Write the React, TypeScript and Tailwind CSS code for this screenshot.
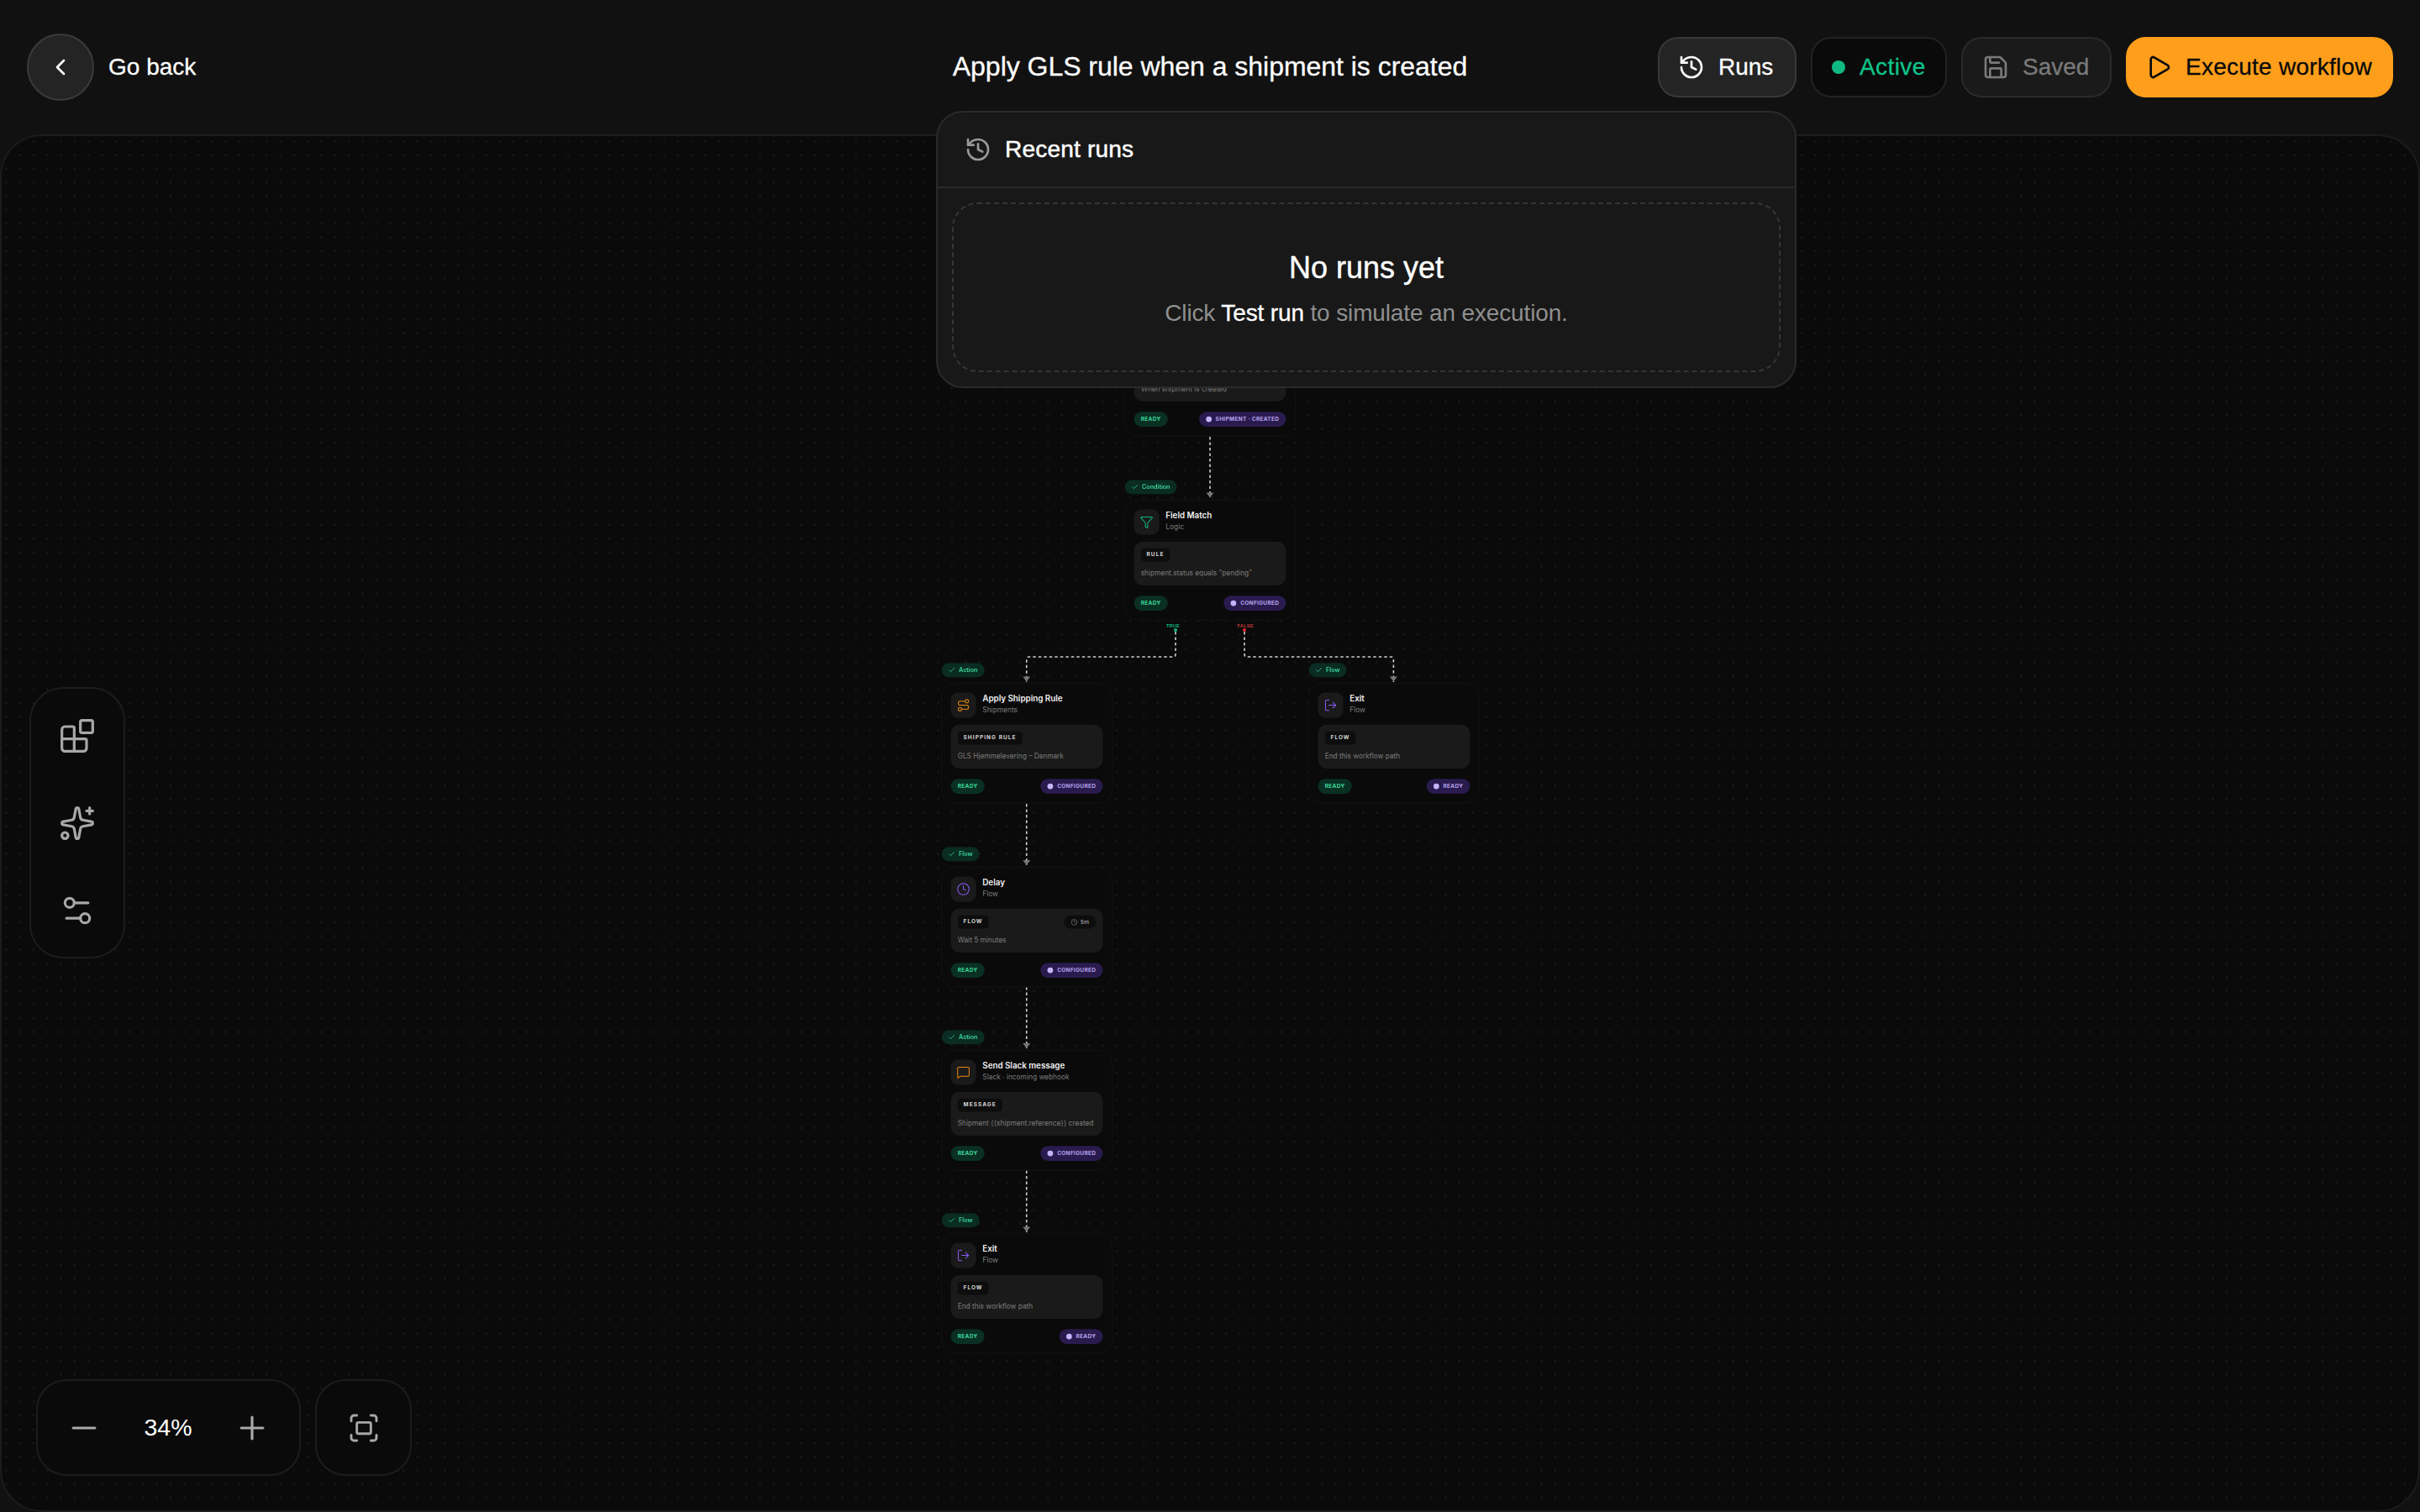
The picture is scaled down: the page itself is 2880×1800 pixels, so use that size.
import { Blocks, Check, ChevronLeft, Clock, Fullscreen, Funnel, History, LogOut, MessageSquare, Minus, Play, Plus, Route, Save, Settings2, Sparkles, Zap } from 'lucide-react';
import type { ReactNode } from 'react';

interface FlowNode {
  x: number;
  y: number;
  badge: string;
  icon: ReactNode;
  title: string;
  sub: string;
  tag: string;
  chip?: string;
  desc: string;
  status: string;
}

const iconClass = 'h-[24px] w-[24px]';

const nodes: FlowNode[] = [
  { x: 1338, y: 376, badge: 'Trigger', icon: <Zap className={`${iconClass} text-[#10b981]`} strokeWidth={1.5} />, title: 'Shipment created', sub: 'Trigger', tag: 'EVENT', desc: 'When shipment is created', status: 'SHIPMENT · CREATED' },
  { x: 1338, y: 594.5, badge: 'Condition', icon: <Funnel className={`${iconClass} text-[#10b981]`} strokeWidth={1.5} />, title: 'Field Match', sub: 'Logic', tag: 'RULE', desc: 'shipment.status equals "pending"', status: 'CONFIGURED' },
  { x: 1119.5, y: 813, badge: 'Action', icon: <Route className={`${iconClass} text-[#e8890c]`} strokeWidth={1.5} />, title: 'Apply Shipping Rule', sub: 'Shipments', tag: 'SHIPPING RULE', desc: 'GLS Hjemmelevering – Danmark', status: 'CONFIGURED' },
  { x: 1556.8, y: 813, badge: 'Flow', icon: <LogOut className={`${iconClass} text-[#8b5cf6]`} strokeWidth={1.5} />, title: 'Exit', sub: 'Flow', tag: 'FLOW', desc: 'End this workflow path', status: 'READY' },
  { x: 1119.5, y: 1031.5, badge: 'Flow', icon: <Clock className={`${iconClass} text-[#8b5cf6]`} strokeWidth={1.5} />, title: 'Delay', sub: 'Flow', tag: 'FLOW', chip: '5m', desc: 'Wait 5 minutes', status: 'CONFIGURED' },
  { x: 1119.5, y: 1249.7, badge: 'Action', icon: <MessageSquare className={`${iconClass} text-[#e8890c]`} strokeWidth={1.5} />, title: 'Send Slack message', sub: 'Slack · incoming webhook', tag: 'MESSAGE', desc: 'Shipment {{shipment.reference}} created', status: 'CONFIGURED' },
  { x: 1119.5, y: 1468.2, badge: 'Flow', icon: <LogOut className={`${iconClass} text-[#8b5cf6]`} strokeWidth={1.5} />, title: 'Exit', sub: 'Flow', tag: 'FLOW', desc: 'End this workflow path', status: 'READY' },
];

function NodeCard({ node }: { node: FlowNode }) {
  return (
    <div
      className="absolute h-[211px] w-[300px] origin-top-left scale-[0.68] rounded-[24px] border border-[#171717] bg-[#0a0a0a] p-4 font-['Inter',sans-serif]"
      style={{ left: node.x, top: node.y }}
    >
      <div className="absolute -top-[36px] left-0 flex h-[25px] items-center gap-[6px] rounded-full bg-[#0a2c22] pl-[11px] pr-[12px] text-[10.5px] font-semibold text-[#3ddc9f]">
        <Check className="h-[13px] w-[13px]" strokeWidth={2} />
        {node.badge}
      </div>
      <div className="flex h-[44px] gap-[11.5px]">
        <div className="flex h-[44px] w-[44px] items-center justify-center rounded-[12px] bg-[#1a1a1a]">{node.icon}</div>
        <div>
          <div className="text-[14.4px] font-semibold leading-[20px] text-[#f2f2f2]">{node.title}</div>
          <div className="text-[12.3px] leading-[20px] text-[#7c7c7c]">{node.sub}</div>
        </div>
      </div>
      <div className="mt-3 h-[77px] rounded-[16px] bg-[#1a1a1a] p-3">
        <div className="flex items-center justify-between">
          <span className="flex h-[23px] items-center rounded-[6px] bg-[#0d0d0d] px-[10px] text-[9.5px] font-bold tracking-[1.6px] text-[#d9d9d9]">{node.tag}</span>
          {node.chip && (
            <span className="flex h-[23px] items-center gap-[5px] rounded-full bg-[#0d0d0d] px-[12px] text-[10px] font-medium text-[#a3a3a3]">
              <Clock className="h-[12px] w-[12px]" strokeWidth={1.5} />
              {node.chip}
            </span>
          )}
        </div>
        <p className="mt-3 truncate text-[12.2px] leading-[16px] text-[#7c7c7c]">{node.desc}</p>
      </div>
      <div className="mt-[18px] flex items-center justify-between">
        <span className="flex h-[26px] items-center rounded-full bg-[#0a3024] px-[12px] text-[9.5px] font-bold tracking-[0.5px] text-[#3ddc9f]">READY</span>
        <span className="flex h-[26px] items-center gap-[7px] rounded-full bg-[#2a1b4f] pl-[12px] pr-[12px] text-[9.5px] font-bold tracking-[0.5px] text-[#b9a5ef]">
          <span className="h-[10px] w-[10px] rounded-full bg-[#c4b5fd]" />
          {node.status}
        </span>
      </div>
    </div>
  );
}

function Connectors() {
  const lines = [
    'M1440 520 V592',
    'M1399 752 V779 Q1399 782 1396 782 H1224.5 Q1221.7 782 1221.7 785 V812',
    'M1481 752 V779 Q1481 782 1484 782 H1655.5 Q1658.4 782 1658.4 785 V812',
    'M1221.7 957 V1030',
    'M1221.7 1175 V1248',
    'M1221.7 1393.5 V1467',
  ];
  const arrows = [[1440, 586.5], [1221.7, 805.5], [1658.4, 805.5], [1221.7, 1024], [1221.7, 1242], [1221.7, 1460.5]];
  return (
    <svg className="absolute inset-0 h-[1800px] w-[2880px]" viewBox="0 0 2880 1800" fill="none">
      {lines.map(d => (
        <path key={d} d={d} stroke="#cfcfcf" strokeWidth="1.6" strokeDasharray="3.5 3" />
      ))}
      {arrows.map(([x, y]) => (
        <path key={`${x}-${y}`} d={`M${x - 4.5} ${y} H${x + 4.5} L${x} ${y + 6} Z`} fill="#767676" />
      ))}
      <circle cx="1399" cy="750" r="2" fill="#10b981" />
      <circle cx="1481" cy="750" r="2" fill="#ef2b2b" />
    </svg>
  );
}

function HeaderButton({ className, children }: { className: string; children: ReactNode }) {
  return <button className={`flex h-[72px] items-center rounded-[24px] border-2 text-[28px] leading-none [-webkit-text-stroke:0.3px] ${className}`}>{children}</button>;
}

export default function App() {
  return (
    <div className="relative flex h-screen w-screen flex-col overflow-hidden bg-[#111111] font-['Liberation_Sans',Arial,sans-serif] text-white">
      <header className="grid h-[160px] shrink-0 grid-cols-[1fr_auto_1fr] items-center px-8">
        <button className="flex items-center gap-[17px] text-[28px] [-webkit-text-stroke:0.3px]">
          <span className="flex h-[80px] w-[80px] items-center justify-center rounded-full border-2 border-[#3b3b3b] bg-[#242424]">
            <ChevronLeft className="h-8 w-8" />
          </span>
          Go back
        </button>
        <h1 className="pb-[2px] text-[32px] font-normal tracking-[-0.03px] [-webkit-text-stroke:0.3px]">Apply GLS rule when a shipment is created</h1>
        <div className="flex items-center justify-end gap-[17px]">
          <HeaderButton className="w-[165px] gap-[16px] border-[#383838] bg-[#242424] pl-[22px] text-white">
            <History className="h-8 w-8" />
            Runs
          </HeaderButton>
          <HeaderButton className="w-[162px] gap-[17px] border-[#222222] bg-[#0a0a0a] pl-[23px] tracking-[0.4px] text-[#10c48c]">
            <span className="h-4 w-4 rounded-full bg-[#10b981]" />
            Active
          </HeaderButton>
          <HeaderButton className="w-[179px] gap-[16px] border-[#2a2a2a] bg-[#1a1a1a] pl-[23px] text-[#7a7a7a]">
            <Save className="h-8 w-8" />
            Saved
          </HeaderButton>
          <HeaderButton className="w-[318px] gap-[16px] border-[#ff9e1b] bg-[#ff9e1b] pl-[21px] tracking-[0.25px] text-[#0a0a0a]">
            <Play className="h-8 w-8" />
            Execute workflow
          </HeaderButton>
        </div>
      </header>

      <main className="relative flex-1 overflow-hidden rounded-[50px] border-2 border-[#1c1c1c] bg-[#0a0a0a] bg-[radial-gradient(circle,#1b1b1b_1px,transparent_1.3px)] bg-[size:16.32px_16.32px] bg-[position:13.5px_-1.9px]">
        <div className="absolute -left-[2px] -top-[162px] h-[1800px] w-[2880px]">
          <Connectors />
          <span className="absolute left-[1396px] top-[745px] -translate-x-1/2 -translate-y-1/2 text-[5.5px] font-bold tracking-[0.3px] text-[#10b981]">TRUE</span>
          <span className="absolute left-[1482px] top-[745px] -translate-x-1/2 -translate-y-1/2 text-[5.5px] font-bold tracking-[0.3px] text-[#c43a3a]">FALSE</span>
          {nodes.map(node => (
            <NodeCard key={`${node.title}-${node.y}`} node={node} />
          ))}
        </div>

        <div className="absolute left-[33px] top-[656px] flex h-[323px] w-[114px] flex-col items-center gap-[60px] rounded-[40px] border-2 border-[#1c1c1c] bg-[#0a0a0a] pt-[34px] text-[#a8a8a8]">
          <Blocks className="h-[44px] w-[44px]" strokeWidth={1.75} />
          <Sparkles className="h-[44px] w-[44px]" strokeWidth={1.75} />
          <Settings2 className="h-[44px] w-[44px]" strokeWidth={1.75} />
        </div>

        <div className="absolute bottom-[41px] left-[41px] flex gap-[17px]">
          <div className="flex h-[115px] w-[315px] items-center justify-between rounded-[36px] border-2 border-[#1c1c1c] bg-[#0a0a0a] pl-[33px] pr-[34px] text-[#a8a8a8]">
            <Minus className="h-[44px] w-[44px]" strokeWidth={1.75} />
            <span className="text-[28.5px] text-white">34%</span>
            <Plus className="h-[44px] w-[44px]" strokeWidth={1.75} />
          </div>
          <div className="flex h-[115px] w-[115px] items-center justify-center rounded-[36px] border-2 border-[#1c1c1c] bg-[#0a0a0a] text-[#a8a8a8]">
            <Fullscreen className="h-[40px] w-[40px]" strokeWidth={1.75} />
          </div>
        </div>
      </main>

      <section className="absolute left-[1114px] top-[132px] flex h-[330px] w-[1024px] flex-col rounded-[32px] border-2 border-[#2a2a2a] bg-[#181818]">
        <div className="flex h-[90px] shrink-0 items-center gap-[16px] border-b-2 border-[#2a2a2a] px-8">
          <History className="h-8 w-8 text-[#999999]" />
          <h2 className="text-[28px] font-normal tracking-[0.2px] [-webkit-text-stroke:0.5px]">Recent runs</h2>
        </div>
        <div className="mx-[17px] mt-[17px] flex h-[202px] flex-col items-center justify-center rounded-[30px] border-2 border-dashed border-[#363636] pt-[4px]">
          <p className="text-[36px] leading-[44px] [-webkit-text-stroke:0.4px]">No runs yet</p>
          <p className="mt-[14px] text-[28px] leading-[36px] tracking-[-0.14px] text-[#8f8f8f]">
            Click <span className="text-white [-webkit-text-stroke:0.3px]">Test run</span> to simulate an execution.
          </p>
        </div>
      </section>
    </div>
  );
}
